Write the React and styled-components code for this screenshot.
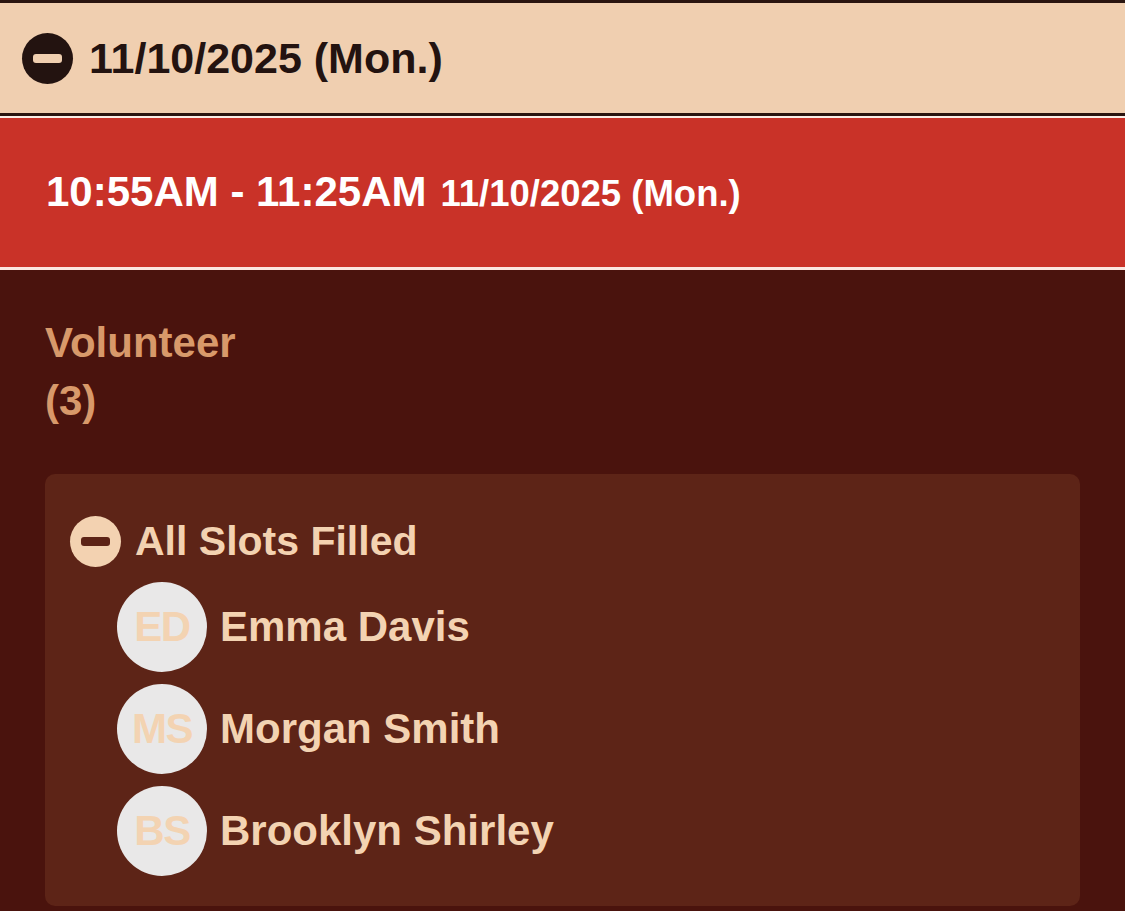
import React from "react";
import styled, { createGlobalStyle } from "styled-components";

const GlobalStyle = createGlobalStyle`
  html, body {
    margin: 0;
    padding: 0;
    background: #4a130d;
  }
  body {
    font-family: "Liberation Sans", Arial, Helvetica, sans-serif;
    -webkit-font-smoothing: antialiased;
  }
  * { box-sizing: border-box; }
`;

const Page = styled.div`
  width: 1125px;
  min-height: 911px;
  background: #4a130d;
  overflow: hidden;
`;

const DateHeader = styled.div`
  display: flex;
  align-items: center;
  gap: 16px;
  height: 116px;
  padding: 0 0 0 22px;
  background: #f0cfb0;
  border-top: 3px solid #2a1510;
  border-bottom: 3px solid #2a1510;
`;

const DateText = styled.span`
  font-size: 43px;
  font-weight: 700;
  color: #231310;
`;

const MinusCircle = styled.span`
  display: inline-flex;
  align-items: center;
  justify-content: center;
  flex: 0 0 auto;
  width: ${(p) => p.$size}px;
  height: ${(p) => p.$size}px;
  border-radius: 50%;
  background: ${(p) => p.$bg};

  &::after {
    content: "";
    width: ${(p) => Math.round(p.$size * 0.57)}px;
    height: 9px;
    border-radius: 3px;
    background: ${(p) => p.$fg};
  }
`;

const TimeSlot = styled.div`
  display: flex;
  align-items: baseline;
  gap: 14px;
  height: 154px;
  padding: 50px 0 0 46px;
  background: #c93228;
  border-top: 2px solid #fbeee6;
  border-bottom: 3px solid #fbe6e0;
  color: #ffffff;
  font-weight: 700;
`;

const TimeRange = styled.span`
  font-size: 42px;
`;

const TimeDate = styled.span`
  font-size: 36.5px;
`;

const Body = styled.div`
  padding: 44px 45px 5px 45px;
`;

const RoleLabel = styled.div`
  font-size: 42px;
  font-weight: 700;
  color: #d8996a;
  line-height: 58px;
  margin-bottom: 44px;
`;

const Card = styled.div`
  background: #5d2417;
  border-radius: 10px;
  padding: 41px 25px 29px 25px;
  height: 432px;
`;

const GroupHeader = styled.div`
  display: flex;
  align-items: center;
  gap: 14px;
  height: 52px;
  margin-bottom: 15px;
`;

const GroupTitle = styled.span`
  font-size: 41px;
  font-weight: 700;
  color: #f3d2b1;
`;

const MemberList = styled.div`
  display: flex;
  flex-direction: column;
  gap: 12px;
  padding-left: 47px;
`;

const MemberRow = styled.div`
  display: flex;
  align-items: center;
  gap: 13px;
`;

const Avatar = styled.div`
  width: 90px;
  height: 90px;
  border-radius: 50%;
  background: #e9e8e8;
  display: flex;
  align-items: center;
  justify-content: center;
  font-size: 42px;
  font-weight: 700;
  color: #f3d3b2;
  letter-spacing: -1.5px;
  flex: 0 0 auto;
`;

const MemberName = styled.span`
  font-size: 42px;
  font-weight: 700;
  color: #f3d3b2;
`;

const members = [
  { initials: "ED", name: "Emma Davis" },
  { initials: "MS", name: "Morgan Smith" },
  { initials: "BS", name: "Brooklyn Shirley" },
];

export default function App() {
  return (
    <Page>
      <GlobalStyle />
      <DateHeader>
        <MinusCircle $size={51} $bg="#231310" $fg="#f0cfb0" />
        <DateText>11/10/2025 (Mon.)</DateText>
      </DateHeader>
      <TimeSlot>
        <TimeRange>10:55AM - 11:25AM</TimeRange>
        <TimeDate>11/10/2025 (Mon.)</TimeDate>
      </TimeSlot>
      <Body>
        <RoleLabel>
          Volunteer
          <br />
          (3)
        </RoleLabel>
        <Card>
          <GroupHeader>
            <MinusCircle $size={51} $bg="#f3d2b1" $fg="#5d2417" />
            <GroupTitle>All Slots Filled</GroupTitle>
          </GroupHeader>
          <MemberList>
            {members.map((m) => (
              <MemberRow key={m.initials}>
                <Avatar>{m.initials}</Avatar>
                <MemberName>{m.name}</MemberName>
              </MemberRow>
            ))}
          </MemberList>
        </Card>
      </Body>
    </Page>
  );
}
